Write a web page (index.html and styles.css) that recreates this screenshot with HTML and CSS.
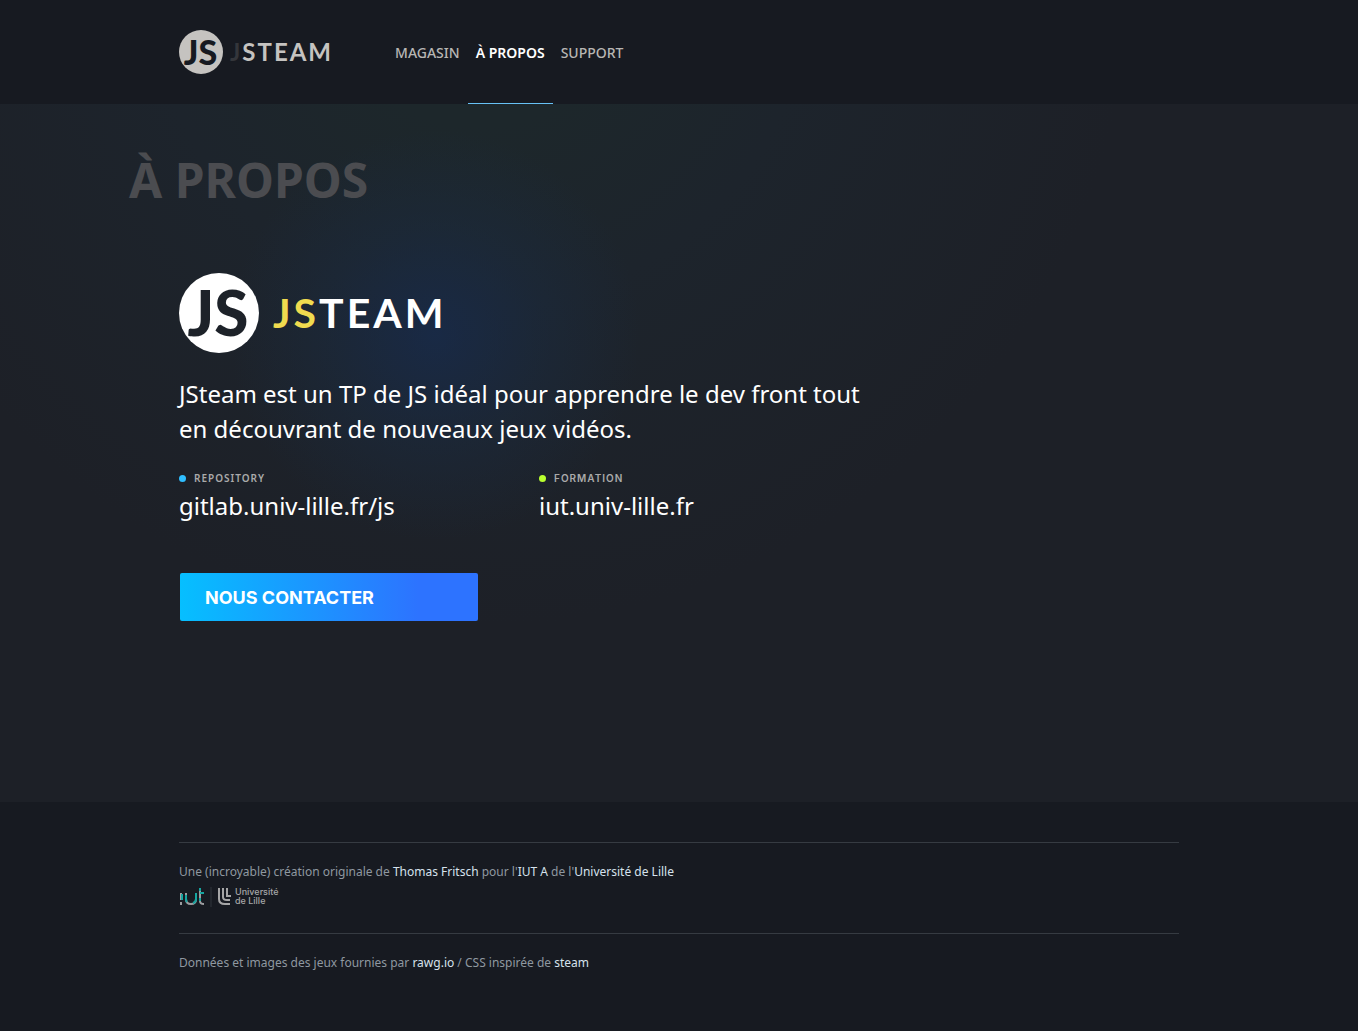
FILE: index.html
```html
<!DOCTYPE html>
<html lang="fr">
<head>
<meta charset="utf-8">
<meta name="viewport" content="width=device-width, initial-scale=1">
<title>À propos - JSteam</title>
<link rel="stylesheet" href="styles.css">
</head>
<body>
<header class="header">
  <div class="container header-inner">
    <a class="logo" href="#">
      <svg class="logo-mark" viewBox="0 0 80 80" aria-label="JS"><circle cx="40" cy="40" r="40"/><text x="39" y="63" text-anchor="middle">JS</text></svg>
      <span class="logo-name"><span class="logo-dim">J</span>STEAM</span>
    </a>
    <nav class="menu">
      <a href="#">Magasin</a>
      <a class="active" href="#">À propos</a>
      <a href="#">Support</a>
    </nav>
  </div>
</header>
<main class="main">
  <div class="title-wrap"><h1>À PROPOS</h1></div>
  <section class="container about">
    <div class="logo logo-big">
      <svg class="logo-mark" viewBox="0 0 80 80" aria-label="JS"><circle cx="40" cy="40" r="40"/><text x="39" y="63" text-anchor="middle">JS</text></svg>
      <span class="logo-name"><span class="logo-yellow">JS</span>TEAM</span>
    </div>
    <p class="intro">JSteam est un TP de JS idéal pour apprendre le dev front tout en découvrant de nouveaux jeux vidéos.</p>
    <dl class="links">
      <div><dt class="blue">Repository</dt><dd><a href="#">gitlab.univ-lille.fr/js</a></dd></div>
      <div><dt class="green">Formation</dt><dd><a href="#">iut.univ-lille.fr</a></dd></div>
    </dl>
    <button class="contact" type="button">Nous contacter</button>
  </section>
</main>
<footer class="footer">
  <div class="container">
    <div class="credits">
      <p>Une (incroyable) création originale de <a href="#">Thomas Fritsch</a> pour l'<a href="#">IUT A</a> de l'<a href="#">Université de Lille</a></p>
      <svg class="univ" width="100" height="20" viewBox="0 0 100 20" aria-label="IUT Université de Lille">
        <g fill="none" stroke="#9c9da0" stroke-width="2">
          <path d="M2 6V13M2 15V18M7 6V12Q7 17 12 17Q17 17 17 12V6M21 1V14Q21 17 25 17"/>
        </g>
        <g fill="none" stroke="#16a5a0" stroke-width="2">
          <path d="M3 7V13M7 8V12Q7 14 8 15M17 6V12Q17 15 14 16M21 1V4M21 6H25M21 11V14"/>
        </g>
        <path d="M32 0V20" stroke="#30343c" stroke-width="1"/>
        <g fill="none" stroke="#a6a6a7" stroke-width="2">
          <path d="M40 1V12Q40 17 46 17H51M44 1V10Q44 13 48 13H51M48 1V9H52"/>
        </g>
        <text x="56" y="8">Université</text>
        <text x="56" y="17">de Lille</text>
      </svg>
    </div>
    <div class="credits">
      <p>Données et images des jeux fournies par <a href="#">rawg.io</a> / CSS inspirée de <a href="#">steam</a></p>
    </div>
  </div>
</footer>
</body>
</html>
```
FILE: styles.css
```css
* { box-sizing: border-box; }

body {
  margin: 0;
  min-height: 100vh;
  display: flex;
  flex-direction: column;
  background: #171a21;
  color: #fff;
  font-family: "Noto Sans", "Open Sans", sans-serif;
}

a { color: inherit; text-decoration: none; }
h1, p, dl, dd { margin: 0; }

.container {
  width: 100%;
  max-width: 1000px;
  margin: 0 auto;
}

.header-inner {
  display: flex;
  height: 104px;
  gap: 54px;
}

.logo {
  display: flex;
  align-items: center;
  gap: 7px;
  color: #c5c3c0;
  font-family: Lato, sans-serif;
  font-weight: 700;
}
.logo-mark { width: 44px; height: 44px; fill: currentColor; }
.logo-mark text { fill: #171a21; font-size: 62px; font-weight: 900; }
.logo-name { font-size: 24px; line-height: 32px; letter-spacing: 2px; }
.logo-dim { color: #34363b; }

.logo-big { gap: 14px; color: #fff; }
.logo-big .logo-mark { width: 80px; height: 80px; }
.logo-big .logo-mark text { fill: #1d2229; }
.logo-big .logo-name { font-size: 41px; line-height: 48px; letter-spacing: 3px; }
.logo-yellow { color: #f0db4f; }

.menu { display: flex; }
.menu a {
  display: flex;
  align-items: center;
  padding: 2px 8px 0;
  border-bottom: 1px solid transparent;
  color: #b8b6b4;
  font-size: 14px;
  font-weight: 500;
  text-transform: uppercase;
}
.menu a.active { color: #fff; font-weight: 600; border-color: #67c1f5; }

.main {
  flex: 1;
  background:
    radial-gradient(circle at 435px 231px, rgba(23, 44, 80, .7), rgba(26, 44, 68, .4) 110px, rgba(29, 32, 39, 0) 205px),
    radial-gradient(circle at 480px -128px, #1d272b 150px, #1d242c 330px, #1d2027 650px);
}
.title-wrap { max-width: 1100px; margin: 0 auto; padding-top: 44px; }
h1 { color: #4b4c50; font-size: 48px; line-height: 64px; font-weight: 700; }
.about { padding: 61px 0 0; }

.intro { max-width: 700px; margin-top: 23px; font-size: 24px; line-height: 35px; }
.links { display: flex; gap: 60px; margin-top: 24px; }
.links div { width: 300px; }
.links dt {
  display: flex;
  align-items: center;
  gap: 8px;
  color: #aaa;
  font-size: 10px;
  line-height: 16px;
  font-weight: 600;
  letter-spacing: 1px;
  text-transform: uppercase;
}
.links dt::before { content: ""; width: 7px; height: 7px; border-radius: 50%; }
.links .blue::before { background: #2fbeff; }
.links .green { font-family: Inter, sans-serif; }
.links .green::before { background: #b9ff2f; }
.links dd { font-size: 24px; line-height: 40px; }

.contact {
  display: block;
  width: 298px;
  height: 48px;
  margin: 47px 1px 0;
  padding: 0 25px;
  border: 0;
  border-radius: 2px;
  background: linear-gradient(90deg, #06bfff, #2d73ff 80%);
  color: #fff;
  font: 700 18px Inter, sans-serif;
  text-align: left;
  text-transform: uppercase;
}

.footer { padding: 40px 0 39px; color: #8f98a0; font-size: 12px; line-height: 18px; }
.footer a { color: #d6e2ed; }
.credits { padding: 20px 0; border-top: 1px solid #363b42; }
.univ { display: block; margin: 6px 0; }
.univ text { fill: #a6a6a7; font: 500 9px Inter, sans-serif; }
```
